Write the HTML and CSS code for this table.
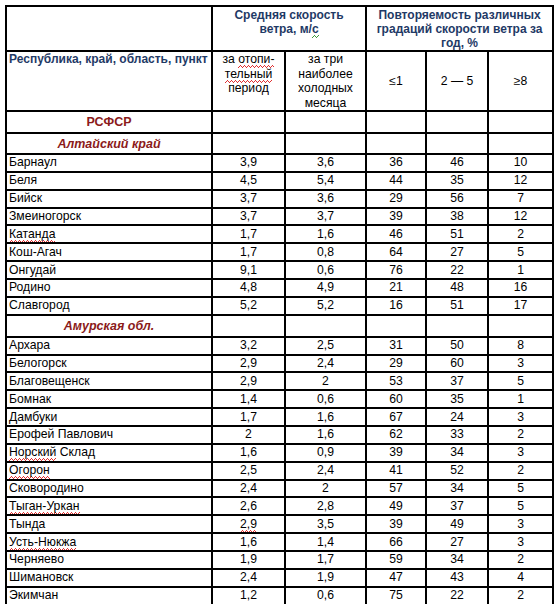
FILE: index.html
```html
<!DOCTYPE html>
<html lang="ru">
<head>
<meta charset="utf-8">
<link rel="stylesheet" href="styles.css">
</head>
<body>
<table class="tbl">
  <colgroup>
    <col class="c-name"><col class="c-a"><col class="c-b"><col class="c-c"><col class="c-d"><col class="c-e">
  </colgroup>
  <tr class="h1">
    <td></td>
    <td colspan="2" class="hd">Средняя скорость ветра, м/<span class="sp-g">с</span></td>
    <td colspan="3" class="hd">Повторяемость различных градаций скорости ветра за год, %</td>
  </tr>
  <tr class="h2">
    <td class="hd-left">Республика, край, область, пункт</td>
    <td class="sub">за <span class="sp">отопи-</span><br><span class="sp">тельный</span><br>период</td>
    <td class="sub">за три наиболее холодных месяца</td>
    <td class="mid">≤1</td>
    <td class="mid">2 — 5</td>
    <td class="mid">≥8</td>
  </tr>
  <tr class="sec1">
    <td class="region">РСФСР</td><td></td><td></td><td></td><td></td><td></td>
  </tr>
  <tr class="sec2">
    <td class="region it">Алтайский край</td><td></td><td></td><td></td><td></td><td></td>
  </tr>
  <tr class="r"><td>Барнаул</td><td>3,9</td><td>3,6</td><td>36</td><td>46</td><td>10</td></tr>
  <tr class="r"><td>Беля</td><td>4,5</td><td>5,4</td><td>44</td><td>35</td><td>12</td></tr>
  <tr class="r"><td>Бийск</td><td>3,7</td><td>3,6</td><td>29</td><td>56</td><td>7</td></tr>
  <tr class="r"><td>Змеиногорск</td><td>3,7</td><td>3,7</td><td>39</td><td>38</td><td>12</td></tr>
  <tr class="r"><td><span class="sp">Катанда</span></td><td>1,7</td><td>1,6</td><td>46</td><td>51</td><td>2</td></tr>
  <tr class="r"><td>Кош-Агач</td><td>1,7</td><td>0,8</td><td>64</td><td>27</td><td>5</td></tr>
  <tr class="r"><td>Онгудай</td><td>9,1</td><td>0,6</td><td>76</td><td>22</td><td>1</td></tr>
  <tr class="r"><td>Родино</td><td>4,8</td><td>4,9</td><td>21</td><td>48</td><td>16</td></tr>
  <tr class="r"><td>Славгород</td><td>5,2</td><td>5,2</td><td>16</td><td>51</td><td>17</td></tr>
  <tr class="sec3">
    <td class="region it">Амурская обл.</td><td></td><td></td><td></td><td></td><td></td>
  </tr>
  <tr class="r"><td>Архара</td><td>3,2</td><td>2,5</td><td>31</td><td>50</td><td>8</td></tr>
  <tr class="r"><td>Белогорск</td><td>2,9</td><td>2,4</td><td>29</td><td>60</td><td>3</td></tr>
  <tr class="r"><td>Благовещенск</td><td>2,9</td><td>2</td><td>53</td><td>37</td><td>5</td></tr>
  <tr class="r"><td>Бомнак</td><td>1,4</td><td>0,6</td><td>60</td><td>35</td><td>1</td></tr>
  <tr class="r"><td>Дамбуки</td><td>1,7</td><td>1,6</td><td>67</td><td>24</td><td>3</td></tr>
  <tr class="r"><td>Ерофей Павлович</td><td>2</td><td>1,6</td><td>62</td><td>33</td><td>2</td></tr>
  <tr class="r"><td><span class="sp">Норский</span> Склад</td><td>1,6</td><td>0,9</td><td>39</td><td>34</td><td>3</td></tr>
  <tr class="r"><td><span class="sp">Огорон</span></td><td>2,5</td><td>2,4</td><td>41</td><td>52</td><td>2</td></tr>
  <tr class="r"><td>Сковородино</td><td>2,4</td><td>2</td><td>57</td><td>34</td><td>5</td></tr>
  <tr class="r"><td><span class="sp">Тыган-Уркан</span></td><td>2,6</td><td>2,8</td><td>49</td><td>37</td><td>5</td></tr>
  <tr class="r"><td>Тында</td><td><span class="sp">2,9</span></td><td>3,5</td><td>39</td><td>49</td><td>3</td></tr>
  <tr class="r"><td><span class="sp">Усть-Нюкжа</span></td><td>1,6</td><td>1,4</td><td>66</td><td>27</td><td>3</td></tr>
  <tr class="r"><td>Черняево</td><td>1,9</td><td>1,7</td><td>59</td><td>34</td><td>2</td></tr>
  <tr class="r"><td>Шимановск</td><td>2,4</td><td>1,9</td><td>47</td><td>43</td><td>4</td></tr>
  <tr class="r"><td>Экимчан</td><td>1,2</td><td>0,6</td><td>75</td><td>22</td><td>2</td></tr>
</table>
</body>
</html>
```
FILE: styles.css
```css
html, body {
  margin: 0;
  padding: 0;
  background: #ffffff;
}
body {
  padding: 5px 0 0 5px;
  font-family: "Liberation Sans", Arial, sans-serif;
  font-size: 12.2px;
  color: #000;
}
.tbl {
  border-collapse: collapse;
  table-layout: fixed;
  width: 549px;
}
.c-name { width: 206px; }
.c-a { width: 73px; }
.c-b { width: 81px; }
.c-c { width: 60px; }
.c-d { width: 62px; }
.c-e { width: 65px; }
.tbl td {
  border: 2px solid #000;
  padding: 0 2px;
  text-align: center;
  vertical-align: middle;
  line-height: 14px;
  overflow: hidden;
}
.h1 { height: 44px; }
.h2 { height: 60px; }
.sec1 { height: 22px; }
.sec2 { height: 21px; }
.sec3 { height: 22px; }
.r { height: 17.87px; }
.r td { padding: 0 3px; line-height: 15px; }
.r td:first-child { text-align: left; padding-left: 2px; }
.hd {
  color: #1f3a66;
  font-weight: bold;
  font-size: 12px;
  line-height: 14px;
  vertical-align: top !important;
  padding-top: 1px !important;
}
.hd-left {
  color: #1f3a66;
  font-weight: bold;
  font-size: 12px;
  text-align: left !important;
  vertical-align: top !important;
  padding-top: 0 !important;
}
.sub {
  vertical-align: top !important;
  padding-top: 0 !important;
  line-height: 14.5px !important;
}
.mid { vertical-align: middle; }
.region {
  color: #8b1a1a;
  font-weight: bold;
  font-size: 12.5px;
}
.it { font-style: italic; }
.sp, .sp-g {
  padding-bottom: 2px;
  background-repeat: repeat-x;
}
.sp {
  background-image:
    repeating-linear-gradient(90deg, transparent 0 2px, #e03030 2px 3px, transparent 3px 4px),
    repeating-linear-gradient(90deg, transparent 0 1px, #e03030 1px 2px, transparent 2px 3px, #e03030 3px 4px),
    repeating-linear-gradient(90deg, #e03030 0 1px, transparent 1px 4px);
  background-size: 100% 1px, 100% 1px, 100% 1px;
  background-position: 0 calc(100% - 2px), 0 calc(100% - 1px), 0 100%;
}
.sp-g {
  background-image:
    repeating-linear-gradient(90deg, transparent 0 2px, #3a9a3a 2px 3px, transparent 3px 4px),
    repeating-linear-gradient(90deg, transparent 0 1px, #3a9a3a 1px 2px, transparent 2px 3px, #3a9a3a 3px 4px),
    repeating-linear-gradient(90deg, #3a9a3a 0 1px, transparent 1px 4px);
  background-size: 100% 1px, 100% 1px, 100% 1px;
  background-position: 0 calc(100% - 2px), 0 calc(100% - 1px), 0 100%;
}
```
